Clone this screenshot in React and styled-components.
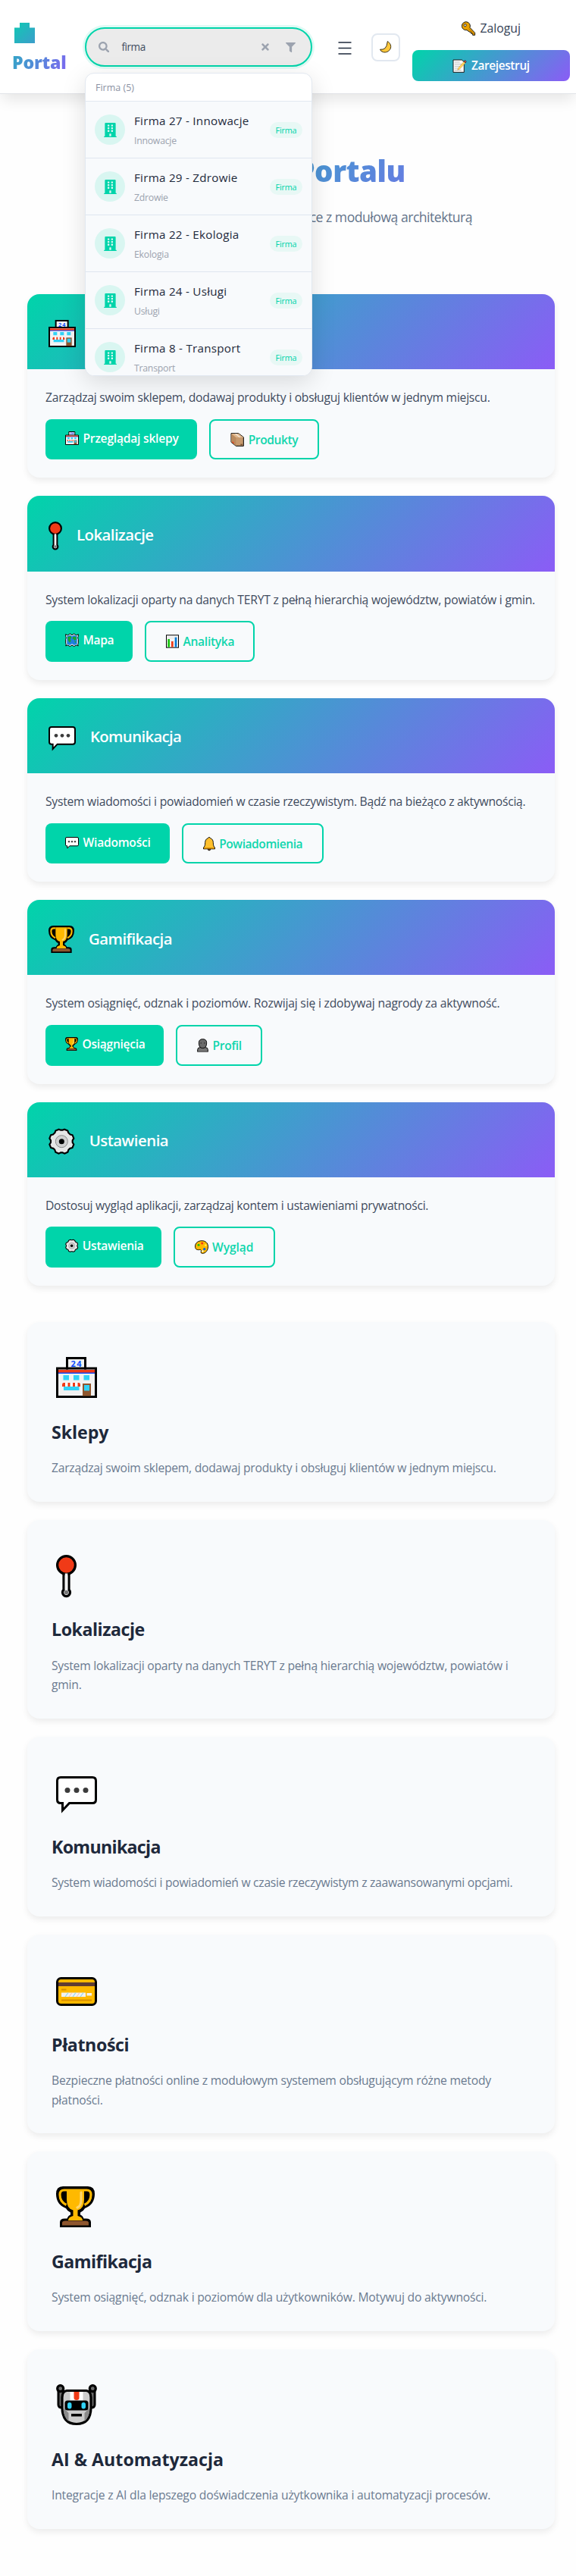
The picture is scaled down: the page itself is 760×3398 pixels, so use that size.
import React from "react";
import styled, { createGlobalStyle } from "styled-components";
import { FaSearch, FaTimes, FaFilter, FaBuilding } from "react-icons/fa";

const GlobalStyle = createGlobalStyle`
  *, *::before, *::after { box-sizing: border-box; }
  body {
    margin: 0;
    background: #fefefe;
    color: #1e293b;
    font-family: "Open Sans", "Noto Sans", sans-serif;
    font-size: 16px;
    line-height: 1.6;
  }
  h1, h2, h3, p { margin: 0; }
  button { font-family: inherit; }
`;

const GRADIENT = "linear-gradient(135deg, #00d4aa 0%, #8b5cf6 100%)";

/* ---------- icons ---------- */

const ICONS = {
  store: {
    w: 54,
    art: (
      <>
        <path d="M14.5 15V1.5h24V15h14v37.5h-51V15z" fill="#f2f2f2" stroke="#000" strokeWidth="3" />
        <path d="M13 15h27" stroke="#000" strokeWidth="3" />
        <rect x="3" y="17" width="48" height="4" fill="#f03a17" />
        <rect x="3" y="20.5" width="48" height="1.5" fill="#0f4cff" />
        <path d="M9.5 24h7.5v6.5H9.5zM23 24h7.5v6.5H23zM36.5 24H44v6.5h-7.5zM10 39h20.5v5H10z" fill="#31d2f7" />
        <path d="M8 37q0-3 2-3h20q2 0 2 3v2H8z" fill="#fff" />
        <path d="M10 34h2v5H8v-2q0-3 2-3zM15.5 34h3v5h-3zM22 34h3v5h-3zM28.5 34H30q2 0 2 3v2h-3.5z" fill="#f03a17" />
        <rect x="35" y="35" width="11" height="16.5" fill="#8e562e" />
        <rect x="37" y="37" width="7" height="7.5" fill="#31d2f7" />
        <text x="27.2" y="13.2" fontSize="11" fontWeight="700" letterSpacing="1.5" textAnchor="middle" fill="#0f4cff">24</text>
      </>
    ),
  },
  pin: {
    w: 27,
    art: (
      <>
        <path d="M10 24v22a5 5 0 1 0 7 0V24z" fill="#f2f2f2" stroke="#000" strokeWidth="3.2" />
        <circle cx="13.5" cy="49.5" r="2.8" fill="#777" />
        <circle cx="13.5" cy="13.5" r="11.9" fill="#f03a17" stroke="#000" strokeWidth="3.2" />
        <path d="M11.7 24.5h3.6V46h-3.6z" fill="#f2f2f2" />
      </>
    ),
  },
  message: {
    w: 54,
    art: (
      <>
        <path d="M6 7.5h42q4.5 0 4.5 4.5v25q0 4.5-4.5 4.5H17.5L8.5 51V41.5H6Q1.5 41.5 1.5 37V12Q1.5 7.5 6 7.5z" fill="#fff" stroke="#000" strokeWidth="3" />
        <circle cx="15" cy="24.5" r="3.5" fill="#3b3b3b" />
        <circle cx="27" cy="24.5" r="3.5" fill="#3b3b3b" />
        <circle cx="39" cy="24.5" r="3.5" fill="#3b3b3b" />
      </>
    ),
  },
  trophy: {
    w: 51,
    art: (
      <>
        <path d="M9 0h33q9 0 9 10 0 14-13 19-2 4-6 5.5v3q3 1 4.5 5h3q6.5 0 6.5 5V54H5v-6.5q0-5 6.5-5h3q1.5-4 4.5-5v-3Q15 33 13 29 0 24 0 10 0 0 9 0z" fill="#000" />
        <path d="M14 3.5h23v14q0 12-8.5 14V39q6.5 1.5 6.5 6H16q0-4.5 6.5-6v-7.5Q14 29.5 14 17.5z" fill="#ffb900" />
        <path d="M14 5H10.5Q5 5 5 11q0 9.5 8.5 13.5M37 5h3.5Q46 5 46 11q0 9.5-8.5 13.5" fill="none" stroke="#ffb900" strokeWidth="3.2" />
        <path d="M33 8v10q0 8-5 10" fill="none" stroke="#ffd56b" strokeWidth="3.2" strokeLinecap="round" />
        <path d="M8 51.5V48q0-2.5 4-2.5h27q4 0 4 2.5v3.5z" fill="#8e562e" />
      </>
    ),
  },
  card: {
    w: 54,
    art: (
      <>
        <rect x="1.5" y="11.5" width="51" height="35" rx="5" fill="#ffb900" stroke="#000" strokeWidth="3" />
        <rect x="3" y="17" width="48" height="5" fill="#5f3c32" />
        <path d="M7 25.5h6.5v2H7zM7 39.5h40v2H7z" fill="#d88f00" />
        <path d="M7 30.5h32v5.5H7zM40.5 31H47v3.5h-6.5z" fill="#f2f2f2" />
        <path d="M12 36l4-5.5M22 36l4-5.5M32 36l4-5.5" stroke="#8fd6f0" strokeWidth="1.2" />
        <path d="M17 36l4-5.5M27 36l4-5.5" stroke="#f8b9a8" strokeWidth=".9" />
      </>
    ),
  },
  robot: {
    w: 54,
    art: (
      <>
        <path d="M3 5v22q0 4 5 4l4-4V17L8 5zM51 5v22q0 4-5 4l-4-4V17l4-12z" fill="#6d6d6d" stroke="#000" strokeWidth="3" strokeLinejoin="round" />
        <circle cx="5.7" cy="5.7" r="4" fill="#6d6d6d" stroke="#000" strokeWidth="3.2" />
        <circle cx="48.3" cy="5.7" r="4" fill="#6d6d6d" stroke="#000" strokeWidth="3.2" />
        <path d="M14 8.5h26q6 1 6 9V30q0 22.5-19 22.5T8 30V17.5q0-8 6-9z" fill="#ccc" stroke="#000" strokeWidth="3.2" />
        <path d="M9.5 31l7 7v11Q9.5 43 9.5 31zM44.5 31l-7 7v11q7-6 7-18z" fill="#8a8a8a" />
        <path d="M18.5 10h17v12h-17z" fill="#fff" />
        <path d="M23.5 10h7v8q0 3-3.5 3t-3.5-3z" fill="#f03a17" />
        <rect x="11.5" y="21.5" width="31" height="13" rx="3.5" fill="#000" />
        <rect x="15" y="24" width="5.5" height="8.5" rx="2.7" fill="#31d2f7" />
        <rect x="33.5" y="24" width="5.5" height="8.5" rx="2.7" fill="#31d2f7" />
        <rect x="20" y="39" width="14" height="3.5" fill="#000" />
      </>
    ),
  },
  gear: {
    w: 52,
    art: (
      <>
        <path d="M20.5 4l4 1.5h3l4-1.5 6.5 2.8 1.5 4.2 3.5 3.2 4.5 1.3L50 22l-2.5 4v4L50 34l-2.8 6.5-4.7 1.3-3 3-1.5 4.4L31.5 52l-4-2h-3l-4 2-6.5-2.8-1.5-4.4-3-3-4.7-1.3L2 34l2.5-4v-4L2 22l2.5-6.5L9 14.2l3.5-3.2L14 6.8z" fill="#e6e6e6" stroke="#000" strokeWidth="3.2" strokeLinejoin="round" />
        <circle cx="26" cy="28" r="12" fill="#d0d0d0" stroke="#8a8a8a" strokeWidth="1.5" />
        <circle cx="26" cy="28" r="5.3" fill="#000" />
      </>
    ),
  },
  box: {
    w: 55,
    art: (
      <>
        <path d="M3 2h29l20 15v35H22L3 37z" fill="#c79a6e" stroke="#000" strokeWidth="3" strokeLinejoin="round" />
        <path d="M3.5 3L22 18h30L32 3z" fill="#dfb78c" />
        <path d="M17 3l18 15h6L23 3z" fill="#f3e6d8" />
        <path d="M3.5 4L22 19v32L3.5 36.5z" fill="#b98a5e" />
        <path d="M8 33l6 5v5l-6-5z" fill="#f03a17" />
        <path d="M40 44h8v5h-8z" fill="#7a5230" />
      </>
    ),
  },
  map: {
    w: 54,
    art: (
      <>
        <path d="M2 5l8 4 9-6 8 5 8-5 9 6 8-4v8l-2 6 2 6v16l-2 5 2 5-8-3-9 5-8-5-8 5-9-5-8 3 2-5-2-5V25l2-6-2-6z" fill="#e8eef2" stroke="#000" strokeWidth="3" strokeLinejoin="round" />
        <path d="M7 13l12-5 8 5 8-5 12 5v31l-12 4-8-5-8 5-12-4z" fill="#1e7fe0" />
        <path d="M9 16l13-4 3 7-5 5 3 7-5 8-6-9zM30 15l14-1 0 12-7 4-4-6-4 1zM36 34l7-2-2 8z" fill="#16a52a" />
      </>
    ),
  },
  chart: {
    w: 51,
    art: (
      <>
        <rect x="1.5" y="2.5" width="48" height="49" fill="#f5f5f5" stroke="#000" strokeWidth="3" />
        <path d="M4 14h43M4 26h43M4 38h43" stroke="#d2d2d2" strokeWidth="1.5" />
        <rect x="7" y="18" width="8" height="32" fill="#16c60c" />
        <rect x="21" y="27" width="8" height="23" fill="#f03a17" />
        <rect x="35" y="11" width="8" height="39" fill="#0078d7" />
      </>
    ),
  },
  bell: {
    w: 48,
    art: (
      <>
        <circle cx="24" cy="48.5" r="5" fill="#8e562e" stroke="#000" strokeWidth="2.5" />
        <path d="M24 1.5c3 0 4 2 5 3.5 8 3 11 10 11 18 0 12 3 16 6.5 19v5.5h-45V42C5 39 8 35 8 23 8 15 11 8 19 5c1-1.5 2-3.5 5-3.5z" fill="#ffc02e" stroke="#000" strokeWidth="2.8" />
        <path d="M3 42h42v4.5H3z" fill="#d88f00" />
      </>
    ),
  },
  person: {
    w: 45,
    art: (
      <>
        <path d="M2 52V44q0-9 10-9h21q10 0 10 9v8z" fill="#767676" stroke="#000" strokeWidth="2.8" />
        <path d="M22.5 2Q38 2 38 17q0 21-15.5 21T7 17Q7 2 22.5 2z" fill="#6a6a6a" stroke="#000" strokeWidth="2.8" />
        <path d="M14 15h3v5h-3zM28 15h3v5h-3z" fill="#2b2b2b" />
        <path d="M2 53h41" stroke="#aaa" strokeWidth="2" />
      </>
    ),
  },
  palette: {
    w: 54,
    art: (
      <>
        <path d="M28 2c14 0 24.5 9 24.5 23S44 52 31 52c-6 0-8-3-6-8 1.5-4-1-7-5-6.5-9 1.5-18.5 0-18.5-13C1.5 10 14 2 28 2z" fill="#ffb900" stroke="#000" strokeWidth="2.8" />
        <circle cx="29" cy="12" r="4.5" fill="#f03a17" />
        <circle cx="15" cy="19" r="4.5" fill="#16c60c" />
        <circle cx="43" cy="20" r="4" fill="#fff04b" />
        <circle cx="38" cy="35" r="5" fill="#0063e0" />
        <circle cx="31" cy="43" r="3.5" fill="#fff" />
      </>
    ),
  },
  key: {
    w: 55,
    art: (
      <>
        <path d="M33 22L53 43v9h-9v-6h-6v-6h-6L21 32A16.5 16.5 0 1 1 33 22z" fill="#e8a000" stroke="#1b1b1b" strokeWidth="3" strokeLinejoin="round" />
        <path d="M28 26l22 22" stroke="#a96b00" strokeWidth="2.5" />
        <circle cx="14" cy="13" r="4.5" fill="#fff" stroke="#1b1b1b" strokeWidth="3" />
      </>
    ),
  },
  memo: {
    w: 56,
    art: (
      <>
        <path d="M3 3h34l9 8v41H3z" fill="#fafafa" stroke="#1b1b1b" strokeWidth="3" />
        <path d="M9 12h20M9 20h28M9 28h22M9 36h18M9 44h26" stroke="#a9a9a9" strokeWidth="2.2" />
        <path d="M20 43l3-8L46 9l6 5.5L28 40z" fill="#ffd45c" stroke="#b8740a" strokeWidth="1" />
        <path d="M45 9l4-3.5q4 0 5.5 4.5L51 15z" fill="#e0544a" stroke="#1b1b1b" strokeWidth="2" />
      </>
    ),
  },
  moon: {
    w: 54,
    art: (
      <path d="M36 2C48 9 55 23 49 36S28 55 15 51Q4 48 2 39q13 2 22-5T36 2z" fill="#ffc83d" stroke="#2b2108" strokeWidth="3.2" strokeLinejoin="round" />
    ),
  },
};

const Pictogram = styled.svg`
  display: block;
  flex: none;
  overflow: visible;
`;

function Icon({ name, size }) {
  const { w, art } = ICONS[name];
  return (
    <Pictogram width={(w * size) / 54} height={size} viewBox={`0 0 ${w} 54`} aria-hidden="true">
      {art}
    </Pictogram>
  );
}

/* ---------- header ---------- */

const Header = styled.header`
  position: relative;
  z-index: 10;
  display: flex;
  align-items: center;
  height: 124px;
  padding: 1px 8px 0 16px;
  background: #fff;
  border-bottom: 1px solid #e2e4e8;
  box-shadow: 0 10px 18px -3px rgba(0, 0, 0, 0.1);
`;

const Logo = styled.a`
  width: 72px;
  height: 77px;
  display: flex;
  flex-direction: column;
`;

const LogoMark = styled.svg`
  display: block;
  margin: 6px 0 0 3px;
`;

const LogoText = styled.span`
  margin-top: 6px;
  font-size: 23.2px;
  font-weight: 800;
  line-height: 38px;
  letter-spacing: -0.25px;
  white-space: nowrap;
  background: linear-gradient(115deg, #2fa9c4 0%, #8065f2 100%);
  background-clip: text;
  -webkit-background-clip: text;
  color: transparent;
`;

const Search = styled.div`
  position: relative;
  flex: none;
  width: 300px;
  margin-left: 24px;
`;

const SearchField = styled.div`
  display: flex;
  align-items: center;
  height: 52px;
  padding: 0 20px 0 16px;
  border: 2px solid #00d4aa;
  border-radius: 26px;
  background: #ebebeb;
  box-shadow: 0 0 0 3px rgba(0, 212, 170, 0.12);
  color: #9ca3af;

  svg { flex: none; display: block; }
`;

const Query = styled.span`
  flex: 1;
  margin-left: 16px;
  font-size: 13.6px;
  letter-spacing: -0.45px;
  color: #3f4b5e;
`;

const FieldActions = styled.span`
  display: flex;
  align-items: center;
  gap: 20px;
`;

const Results = styled.div`
  position: absolute;
  top: 60px;
  left: 0;
  width: 300px;
  height: 400px;
  overflow: hidden;
  background: #fff;
  border: 1px solid #e2e8f0;
  border-radius: 12px;
  box-shadow: 0 8px 32px rgba(0, 0, 0, 0.13);
`;

const ResultsHeading = styled.div`
  height: 37px;
  padding: 0 13px;
  border-bottom: 1px solid #e2e8f0;
  font-size: 12.5px;
  line-height: 38px;
  color: #8b92a3;
`;

const ResultRow = styled.div`
  display: flex;
  align-items: center;
  height: 75px;
  padding: 0 12px;
  background: #f8fafc;
  border-bottom: 1px solid #dfe6f0;
`;

const Avatar = styled.span`
  display: flex;
  align-items: center;
  justify-content: center;
  flex: none;
  width: 40px;
  height: 40px;
  border-radius: 50%;
  background: #d9f6f1;
  color: #00d4aa;
  font-size: 19px;
`;

const ResultText = styled.div`
  flex: 1;
  display: flex;
  flex-direction: column;
  gap: 3px;
  margin-left: 12px;
  padding-top: 2px;
  white-space: nowrap;
`;

const ResultName = styled.span`
  font-size: 15.2px;
  font-weight: 500;
  line-height: 24px;
  letter-spacing: 0.26px;
  color: #1e293b;
`;

const ResultKind = styled.span`
  font-size: 12.3px;
  line-height: 23px;
  letter-spacing: -0.26px;
  color: #9ca3af;
`;

const Badge = styled.span`
  width: 43px;
  border-radius: 12px;
  background: #e8f8f5;
  font-size: 10.8px;
  line-height: 21px;
  letter-spacing: -0.15px;
  text-align: center;
  color: #00d4aa;
`;

const MenuIcon = styled.svg`
  display: block;
  flex: none;
  margin: 2px 0 0 34px;
`;

const ThemeToggle = styled.button`
  display: flex;
  align-items: center;
  justify-content: center;
  flex: none;
  width: 38px;
  height: 37px;
  margin-left: 26px;
  padding: 0;
  border: 2px solid #e2e8f0;
  border-radius: 8px;
  background: #fff;
`;

const Auth = styled.nav`
  display: flex;
  flex-direction: column;
  flex: none;
  gap: 8px;
  width: 208px;
  margin-left: 16px;
`;

const AuthLink = styled.a`
  display: flex;
  align-items: center;
  justify-content: center;
  gap: 6px;
  height: 41px;
  padding-top: 1px;
  border-radius: 8px;
  font-size: ${(p) => (p.$primary ? "15.4px" : "15.8px")};
  font-weight: ${(p) => (p.$primary ? 600 : 500)};
  letter-spacing: ${(p) => (p.$primary ? "-0.35px" : "0")};
  color: ${(p) => (p.$primary ? "#fff" : "#334155")};
  background: ${(p) => (p.$primary ? GRADIENT : "none")};
`;

/* ---------- main ---------- */

const Main = styled.main`
  padding: 77px 28px 62px 36px;
`;

const Hero = styled.section`
  height: 187px;
  text-align: center;
`;

const HeroTitle = styled.h1`
  margin-bottom: 23px;
  font-size: 38.5px;
  font-weight: 800;
  line-height: 48px;
  letter-spacing: -0.45px;
  background: ${GRADIENT};
  background-clip: text;
  -webkit-background-clip: text;
  color: transparent;
`;

const HeroLead = styled.p`
  font-size: 17.6px;
  line-height: 28px;
  letter-spacing: -0.49px;
  color: #64748b;
`;

const Stack = styled.section`
  display: flex;
  flex-direction: column;
  gap: 24px;
  margin-bottom: ${(p) => p.$after || 0}px;
`;

const Card = styled.article`
  overflow: hidden;
  border-radius: 16px;
  background: #f8fafc;
  box-shadow: 0 4px 8px rgba(0, 0, 0, 0.075);
`;

const ModuleHeader = styled.header`
  display: flex;
  align-items: center;
  gap: 20px;
  height: 99.2px;
  padding: 4px 28px 0;
  background: ${GRADIENT};
`;

const ModuleTitle = styled.h2`
  margin: -1px 0 0 -1px;
  font-size: 20.4px;
  font-weight: 600;
  line-height: 33px;
  letter-spacing: ${(p) => p.$ls}px;
  color: #fff;
`;

const ModuleBody = styled.div`
  padding: 25px 24px 24px;
`;

const Text = styled.p`
  font-size: 15.7px;
  line-height: 25.6px;
  letter-spacing: ${(p) => p.$ls}px;
  color: ${(p) => (p.$muted ? "#6b7a90" : "#3f4b5e")};
`;

const Actions = styled.div`
  display: flex;
  gap: 16px;
  height: 53.6px;
  margin-top: 15px;
`;

const Action = styled.a`
  display: flex;
  align-items: flex-start;
  gap: 5.5px;
  width: ${(p) => p.$w}px;
  padding: 13px 0 0 26px;
  border: ${(p) => (p.$outline ? "2px solid #00d4aa" : "0")};
  border-radius: 8px;
  background: ${(p) => (p.$outline ? "none" : "#00d4aa")};
  color: ${(p) => (p.$outline ? "#10d6ad" : "#fff")};
  font-size: 15.6px;
  font-weight: 600;
  line-height: 25.6px;
  letter-spacing: ${(p) => p.$ls}px;
  white-space: nowrap;

  svg { margin-top: 3px; }
`;

const Feature = styled(Card)`
  padding: 32px 32px 31px;
`;

const FeatureIcon = styled.div`
  height: 76.8px;
  padding: 14px 0 0 6px;
`;

const FeatureTitle = styled.h3`
  margin: 17px 0 16px;
  font-size: 23.2px;
  font-weight: 700;
  line-height: 38.4px;
  letter-spacing: ${(p) => p.$ls}px;
  color: #1e293b;
`;

/* ---------- content ---------- */

const RESULTS = [
  ["Firma 27 - Innowacje", "Innowacje"],
  ["Firma 29 - Zdrowie", "Zdrowie"],
  ["Firma 22 - Ekologia", "Ekologia"],
  ["Firma 24 - Usługi", "Usługi"],
  ["Firma 8 - Transport", "Transport"],
];

const MODULES = [
  {
    icon: "store", title: "Sklepy", ls: -0.3, textLs: -0.253,
    text: "Zarządzaj swoim sklepem, dodawaj produkty i obsługuj klientów w jednym miejscu.",
    actions: [["store", "Przeglądaj sklepy", 199.8, -0.22], ["box", "Produkty", 145, -0.4]],
  },
  {
    icon: "pin", title: "Lokalizacje", ls: -0.55, textLs: -0.238,
    text: "System lokalizacji oparty na danych TERYT z pełną hierarchią województw, powiatów i gmin.",
    actions: [["map", "Mapa", 115, -0.35], ["chart", "Analityka", 145, -0.3]],
  },
  {
    icon: "message", title: "Komunikacja", ls: -0.68, textLs: -0.26,
    text: "System wiadomości i powiadomień w czasie rzeczywistym. Bądź na bieżąco z aktywnością.",
    actions: [["message", "Wiadomości", 163.7, -0.23], ["bell", "Powiadomienia", 187, -0.46]],
  },
  {
    icon: "trophy", title: "Gamifikacja", ls: -0.55, textLs: -0.2,
    text: "System osiągnięć, odznak i poziomów. Rozwijaj się i zdobywaj nagrody za aktywność.",
    actions: [["trophy", "Osiągnięcia", 156, -0.3], ["person", "Profil", 114, -0.3]],
  },
  {
    icon: "gear", title: "Ustawienia", ls: -0.5, textLs: -0.27,
    text: "Dostosuj wygląd aplikacji, zarządzaj kontem i ustawieniami prywatności.",
    actions: [["gear", "Ustawienia", 152.6, -0.3], ["palette", "Wygląd", 134, -0.1]],
  },
];

const FEATURES = [
  ["store", "Sklepy", -0.05, "Zarządzaj swoim sklepem, dodawaj produkty i obsługuj klientów w jednym miejscu.", -0.253],
  ["pin", "Lokalizacje", -0.47, "System lokalizacji oparty na danych TERYT z pełną hierarchią województw, powiatów i gmin.", -0.238],
  ["message", "Komunikacja", -0.7, "System wiadomości i powiadomień w czasie rzeczywistym z zaawansowanymi opcjami.", -0.29],
  ["card", "Płatności", -0.4, "Bezpieczne płatności online z modułowym systemem obsługującym różne metody płatności.", -0.24],
  ["trophy", "Gamifikacja", -0.52, "System osiągnięć, odznak i poziomów dla użytkowników. Motywuj do aktywności.", -0.22],
  ["robot", "AI & Automatyzacja", 0, "Integracje z AI dla lepszego doświadczenia użytkownika i automatyzacji procesów.", -0.2],
];

export default function App() {
  return (
    <>
      <GlobalStyle />
      <Header>
        <Logo>
          <LogoMark width="27" height="27" viewBox="0 0 27 27" aria-hidden="true">
            <defs>
              <linearGradient id="mark" x1="0" y1="0" x2="1" y2="1">
                <stop offset="0" stopColor="#0fc9b3" />
                <stop offset="1" stopColor="#3c9dcb" />
              </linearGradient>
            </defs>
            <path d="M7 0h13v6.5h7V27H0V6.5h7z" fill="url(#mark)" />
          </LogoMark>
          <LogoText>Portal</LogoText>
        </Logo>

        <Search>
          <SearchField>
            <FaSearch size={14.4} />
            <Query>firma</Query>
            <FieldActions>
              <FaTimes size={14} />
              <FaFilter size={13} />
            </FieldActions>
          </SearchField>
          <Results>
            <ResultsHeading>Firma (5)</ResultsHeading>
            {RESULTS.map(([name, kind]) => (
              <ResultRow key={name}>
                <Avatar><FaBuilding /></Avatar>
                <ResultText>
                  <ResultName>{name}</ResultName>
                  <ResultKind>{kind}</ResultKind>
                </ResultText>
                <Badge>Firma</Badge>
              </ResultRow>
            ))}
          </Results>
        </Search>

        <MenuIcon width="18" height="18" viewBox="0 0 18 18" aria-label="Menu">
          <path d="M.5 2h17M.5 9.5h17M.5 17h17" stroke="#1e293b" strokeWidth="1.7" />
        </MenuIcon>
        <ThemeToggle aria-label="Motyw"><Icon name="moon" size={15.5} /></ThemeToggle>
        <Auth>
          <AuthLink><Icon name="key" size={18} />Zaloguj</AuthLink>
          <AuthLink $primary><Icon name="memo" size={18} />Zarejestruj</AuthLink>
        </Auth>
      </Header>

      <Main>
        <Hero>
          <HeroTitle>Witaj w Portalu</HeroTitle>
          <HeroLead>Nowoczesna platforma e-commerce z modułową architekturą</HeroLead>
        </Hero>

        <Stack $after={48}>
          {MODULES.map((m) => (
            <Card key={m.title}>
              <ModuleHeader>
                <Icon name={m.icon} size={36} />
                <ModuleTitle $ls={m.ls}>{m.title}</ModuleTitle>
              </ModuleHeader>
              <ModuleBody>
                <Text $ls={m.textLs}>{m.text}</Text>
                <Actions>
                  {m.actions.map(([icon, label, w, ls], i) => (
                    <Action key={label} $outline={i === 1} $w={w} $ls={ls}>
                      <Icon name={icon} size={18} />
                      {label}
                    </Action>
                  ))}
                </Actions>
              </ModuleBody>
            </Card>
          ))}
        </Stack>

        <Stack>
          {FEATURES.map(([icon, title, titleLs, text, textLs]) => (
            <Feature key={title}>
              <FeatureIcon><Icon name={icon} size={54} /></FeatureIcon>
              <FeatureTitle $ls={titleLs}>{title}</FeatureTitle>
              <Text $muted $ls={textLs}>{text}</Text>
            </Feature>
          ))}
        </Stack>
      </Main>
    </>
  );
}
